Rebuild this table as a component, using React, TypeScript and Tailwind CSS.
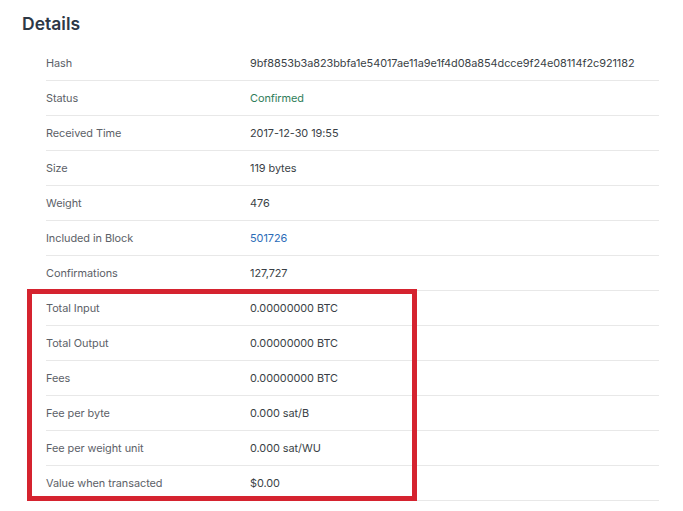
const rows: { label: string; value: string; tone?: "green" | "blue" }[] = [
  { label: "Hash", value: "9bf8853b3a823bbfa1e54017ae11a9e1f4d08a854dcce9f24e08114f2c921182" },
  { label: "Status", value: "Confirmed", tone: "green" },
  { label: "Received Time", value: "2017-12-30 19:55" },
  { label: "Size", value: "119 bytes" },
  { label: "Weight", value: "476" },
  { label: "Included in Block", value: "501726", tone: "blue" },
  { label: "Confirmations", value: "127,727" },
  { label: "Total Input", value: "0.00000000 BTC" },
  { label: "Total Output", value: "0.00000000 BTC" },
  { label: "Fees", value: "0.00000000 BTC" },
  { label: "Fee per byte", value: "0.000 sat/B" },
  { label: "Fee per weight unit", value: "0.000 sat/WU" },
  { label: "Value when transacted", value: "$0.00" },
];

const toneClass = {
  green: "text-[#2f7d5a]",
  blue: "text-[#2b6cb8]",
};

export default function App() {
  return (
    <div className="relative h-[511px] w-[683px] overflow-hidden bg-white font-['Inter',sans-serif]">
      <h2 className="pl-[22px] pt-[12px] text-[17.5px] font-semibold leading-[24px] text-[#2d3846]">Details</h2>
      <div className="ml-[46px] mt-[10px] w-[613px]">
        {rows.map((r) => (
          <div key={r.label} className="flex h-[35px] items-center border-b border-[#e8e8e8] text-[10.9px] tracking-[-0.05px]">
            <div className="w-[204px] shrink-0 text-[#5c6168]">{r.label}</div>
            <div className={r.tone ? toneClass[r.tone] : "text-[#3a3f46]"}>{r.value}</div>
          </div>
        ))}
      </div>
      {/* highlight overlay */}
      <div className="absolute left-[27px] top-[289px] h-[212px] w-[390px] border-[5px] border-[#d5232f]" />
    </div>
  );
}
